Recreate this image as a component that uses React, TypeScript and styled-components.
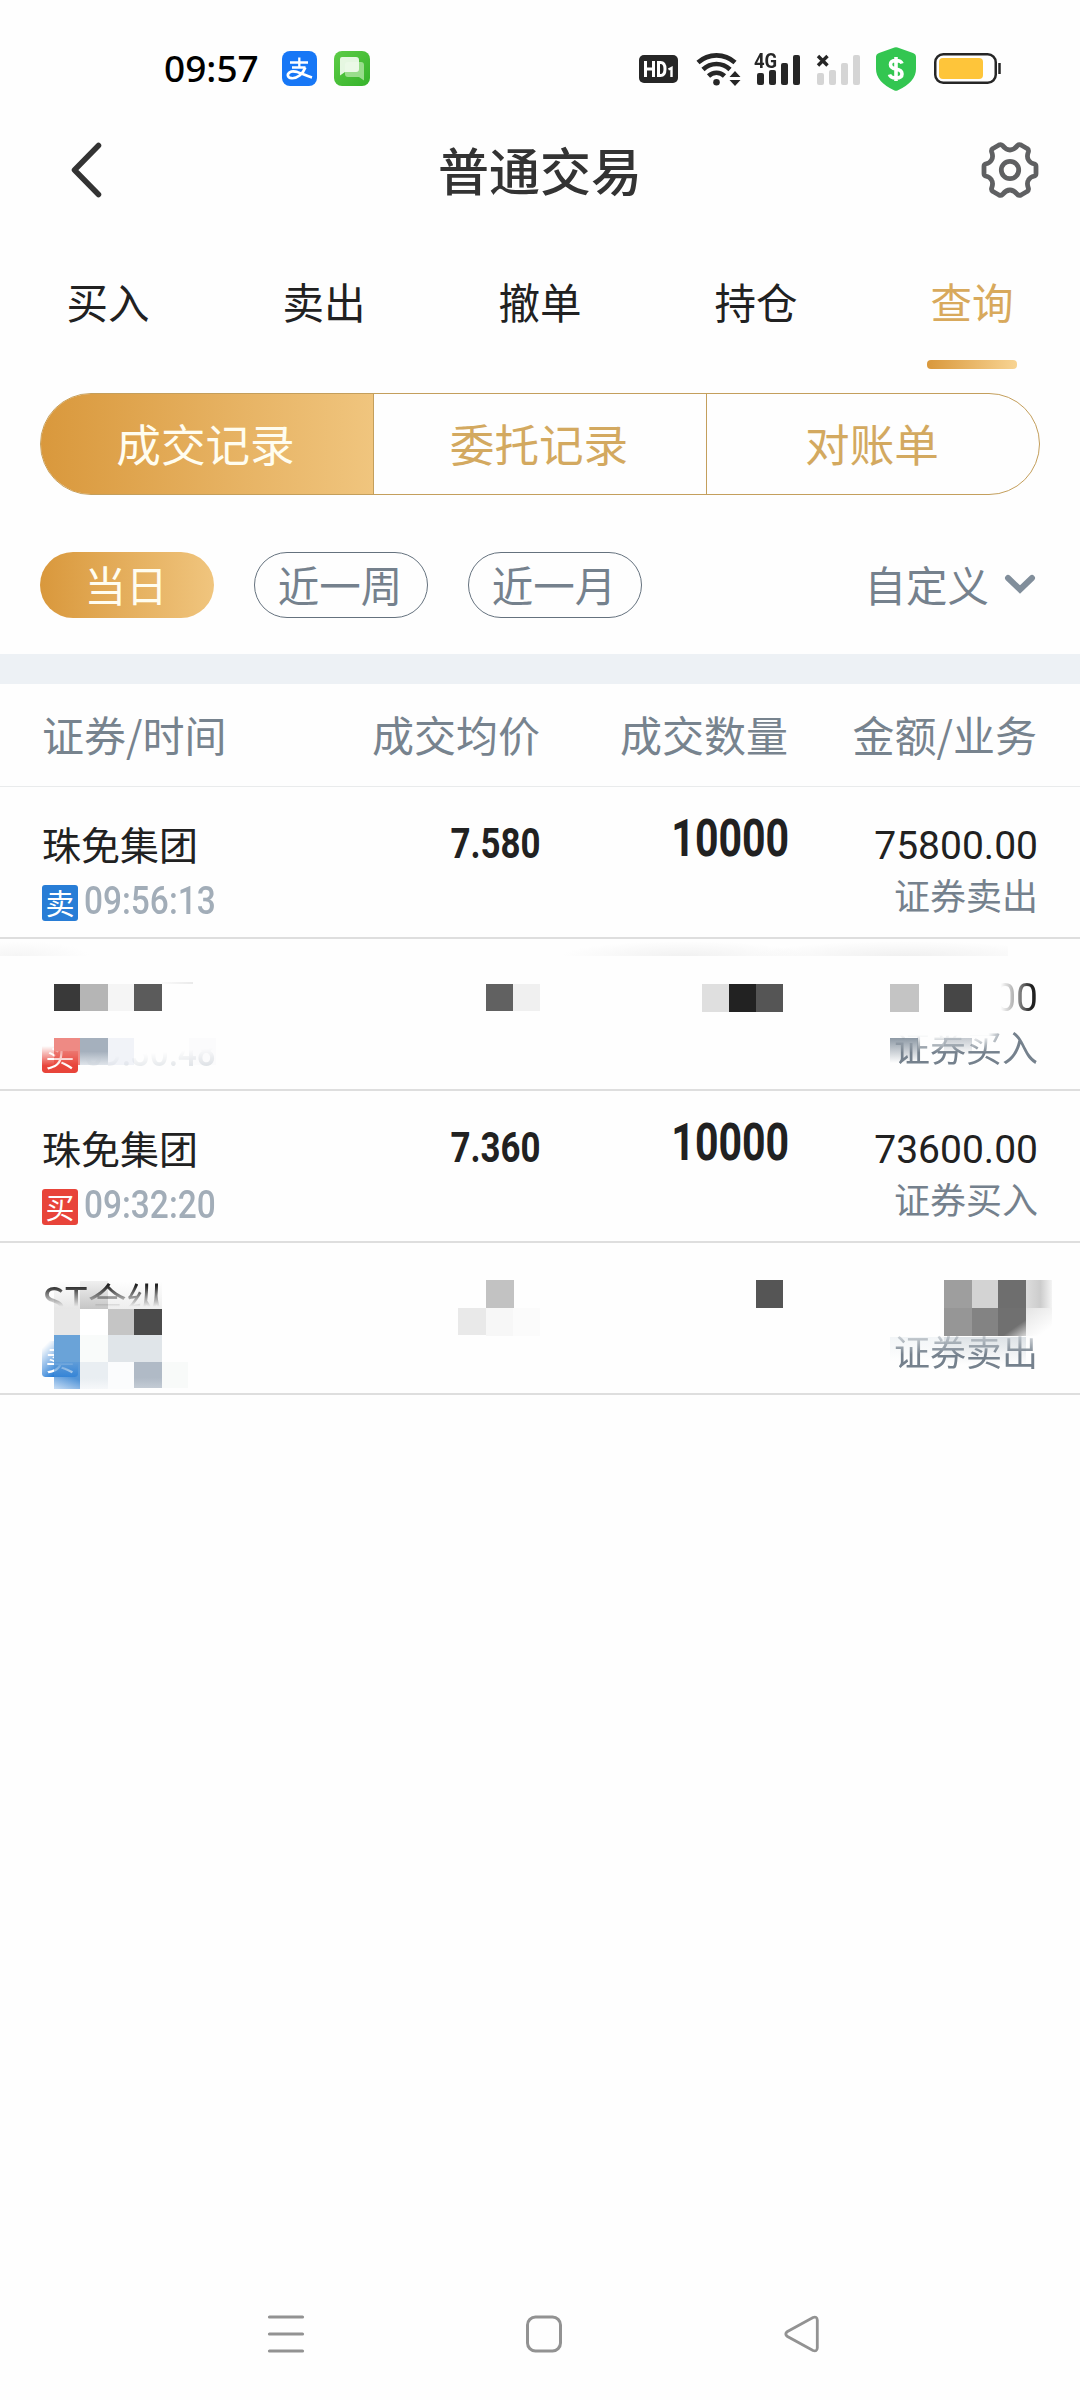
import React from "react";
import styled, { createGlobalStyle } from "styled-components";

const cjk = `"Noto Sans CJK SC", sans-serif`;
const digits = `Roboto, "Noto Sans CJK SC", sans-serif`;
const gold = "linear-gradient(90deg, #d9983c, #f0c57e)";

const GlobalStyle = createGlobalStyle`
  *, *::before, *::after { box-sizing: border-box; }
  body { margin: 0; background: #fefefe; }
`;

const Screen = styled.div`
  width: 1080px;
  height: 2400px;
  display: flex;
  flex-direction: column;
  background: #fefefe;
  font-family: ${cjk};
  color: #212121;
  overflow: hidden;
`;

const StatusBar = styled.header`
  height: 120px;
  padding: 17px 78px 0 164px;
  display: flex;
  align-items: center;
  flex: none;
`;
const Clock = styled.span`
  width: 118px;
  padding-bottom: 2px;
  font: 500 37px/40px "Noto Sans", sans-serif;
  color: #000;
  white-space: nowrap;
`;
const StatusApps = styled.div`
  display: flex;
  gap: 17px;
`;
const StatusSignals = styled.div`
  margin-left: auto;
  display: flex;
  align-items: center;
`;
const Glyph = styled.svg<{ $ml?: number }>`
  display: block;
  flex: none;
  margin-left: ${(p) => p.$ml ?? 0}px;
  overflow: visible;
`;

const TitleBar = styled.div`
  height: 102px;
  padding: 0 41px 2px 69px;
  display: grid;
  grid-template-columns: 369px 1fr 58px;
  align-items: center;
  flex: none;
`;
const Title = styled.h1`
  margin: 0;
  padding-bottom: 3px;
  font-size: 51px;
  line-height: 60px;
  font-weight: 500;
  color: #333;
`;

const Tabs = styled.nav`
  height: 171px;
  display: grid;
  grid-template-columns: repeat(5, 1fr);
  padding-top: 49px;
  flex: none;
`;
const Tab = styled.div<{ $active?: boolean }>`
  display: flex;
  flex-direction: column;
  align-items: center;
  gap: 29px;
  font-size: 41.5px;
  line-height: 60px;
  color: ${(p) => (p.$active ? "#d8a95c" : "#212121")};
  &::after {
    content: "";
    width: 90px;
    height: 9px;
    border-radius: 4px;
    background: ${(p) => (p.$active ? "linear-gradient(90deg, #d9983c, #f8d493)" : "none")};
  }
`;

const Segments = styled.div`
  height: 102px;
  margin: 0 40px;
  display: grid;
  grid-template-columns: 332px 333px 333px;
  border: 1px solid #c49f5c;
  border-radius: 51px;
  overflow: hidden;
  flex: none;
`;
const Segment = styled.div<{ $active?: boolean }>`
  margin: ${(p) => (p.$active ? "-1px 0 -1px -1px" : "0")};
  display: flex;
  align-items: center;
  justify-content: center;
  padding: 0 2px 4px 0;
  font-size: 44.6px;
  color: ${(p) => (p.$active ? "#fffdf0" : "#d3a960")};
  background: ${(p) => (p.$active ? gold : "none")};
  & + & { border-left: 1px solid #c49f5c; }
`;

const Filters = styled.div`
  height: 159px;
  padding: 57px 44px 0 40px;
  display: flex;
  align-items: flex-start;
  gap: 40px;
  flex: none;
`;
const Pill = styled.div<{ $active?: boolean }>`
  width: 174px;
  height: 66px;
  border-radius: 33px;
  border: ${(p) => (p.$active ? "0" : "1px solid #65727e")};
  background: ${(p) => (p.$active ? gold : "none")};
  color: ${(p) => (p.$active ? "#fffdf0" : "#75818d")};
  display: flex;
  align-items: center;
  justify-content: center;
  font-size: 41.5px;
  line-height: 60px;
  padding: 0 2px 3px 0;
`;
const CustomRange = styled.div`
  height: 64px;
  margin-left: auto;
  display: flex;
  align-items: center;
  gap: 15px;
  font-size: 41.5px;
  line-height: 60px;
  color: #75818d;
`;

const Divider = styled.div`
  height: 30px;
  background: #edf1f5;
  flex: none;
`;

const columns = "grid-template-columns: 298px 200px 248px 249px;";

const TableHead = styled.div`
  height: 103px;
  padding: 0 42px;
  padding-bottom: 3px;
  display: grid;
  ${columns}
  align-items: center;
  font-size: 42px;
  color: #77838e;
  border-bottom: 1px solid #e9ebec;
  flex: none;
`;
const HeadCell = styled.span<{ $end?: boolean }>`
  text-align: ${(p) => (p.$end ? "right" : "left")};
  white-space: nowrap;
`;

const Row = styled.article`
  position: relative;
  height: 152px;
  padding: 0 42px;
  display: grid;
  ${columns}
  border-bottom: 2px solid #dedede;
  flex: none;
`;
const Cell = styled.div<{ $end?: boolean; $top: number }>`
  display: flex;
  flex-direction: column;
  align-items: ${(p) => (p.$end ? "flex-end" : "flex-start")};
  padding-top: ${(p) => p.$top}px;
  white-space: nowrap;
`;
const Name = styled.div<{ $mask?: string }>`
  height: 48px;
  font-size: 39px;
  line-height: 48px;
  mask-image: ${(p) => p.$mask ?? "none"};
`;
const Meta = styled.div`
  display: flex;
  align-items: flex-start;
  gap: 6px;
  margin-top: 18px;
`;
const Side = styled.span<{ $buy?: boolean; $mask?: string }>`
  width: 36px;
  height: 36px;
  border-radius: 3px;
  background: ${(p) => (p.$buy ? "#e8443a" : "#287dd6")};
  color: #fff;
  font-size: 29px;
  line-height: 34px;
  text-align: center;
  mask-image: ${(p) => p.$mask ?? "none"};
`;
const Time = styled.span<{ $mask?: string }>`
  font: 500 39.5px/32px ${digits};
  color: #a2adb8;
  transform: scaleX(0.847);
  transform-origin: left;
  mask-image: ${(p) => p.$mask ?? "none"};
`;
const Price = styled.div`
  font: 700 42px/48px ${digits};
  transform: translateX(1px) scaleX(0.83);
  transform-origin: right;
`;
const Quantity = styled.div`
  font: 700 52px/56px ${digits};
  transform: translateX(1px) scaleX(0.79);
  transform-origin: right;
`;
const Amount = styled.div<{ $mask?: string }>`
  height: 44px;
  margin-right: -1px;
  font: 400 39px/44px ${digits};
  mask-image: ${(p) => p.$mask ?? "none"};
`;
const Business = styled.div<{ $mask?: string }>`
  font-size: 36px;
  line-height: 44px;
  margin: 4px -1px 0 0;
  color: #75818d;
  mask-image: ${(p) => p.$mask ?? "none"};
`;
const Block = styled.i<{ $b: BlockSpec }>`
  position: absolute;
  left: ${(p) => p.$b[0]}px;
  top: ${(p) => p.$b[1]}px;
  width: ${(p) => p.$b[2]}px;
  height: ${(p) => p.$b[3]}px;
  background: ${(p) => p.$b[4]};
`;
const NavBar = styled.footer`
  height: 132px;
  margin-top: auto;
  padding: 0 260px 0 267px;
  display: flex;
  align-items: center;
  justify-content: space-between;
  flex: none;
`;

/* left, top, width, height, fill — relative to the row */
type BlockSpec = [number, number, number, number, string];

type Trade = {
  name?: string;
  time?: string;
  buy: boolean;
  price?: string;
  quantity?: string;
  amount?: string;
  masks?: { name?: string; side?: string; time?: string; amount?: string; business?: string };
  under?: BlockSpec[];
  over?: BlockSpec[];
};

const trades: Trade[] = [
  { name: "珠免集团", time: "09:56:13", buy: false, price: "7.580", quantity: "10000", amount: "75800.00" },
  {
    time: "09:30:48",
    buy: true,
    amount: "00",
    masks: {
      side: "linear-gradient(180deg, transparent 25%, #000 80%)",
      time: "linear-gradient(176deg, transparent 50%, rgba(0,0,0,.4) 100%)",
      amount: "linear-gradient(90deg, transparent 15%, rgba(0,0,0,.35) 45%, #000 85%)",
      business: "linear-gradient(260deg, #000 22%, transparent 34%), linear-gradient(180deg, transparent 25%, #000 65%)",
    },
    under: [
      [0, 2, 90, 15, "radial-gradient(ellipse at 20% 100%, #f5f5f5, transparent 70%)"],
      [560, 2, 250, 15, "radial-gradient(ellipse at 50% 100%, #f1f1f1, transparent 70%)"],
      [750, 2, 258, 15, "radial-gradient(ellipse at 60% 100%, #f0f0f0, transparent 70%)"],
      [890, 99, 28, 25, "linear-gradient(#8d99a5, transparent)"],
      [944, 99, 28, 17, "linear-gradient(#c5cad0, transparent)"],
      [108, 99, 26, 27, "#f1f3f8"],
      [189, 99, 27, 27, "#fbfbfc"],
      [80, 99, 28, 27, "linear-gradient(#a5b0bd 50%, #dfe4ea)"],
      [54, 99, 26, 27, "#ee8a84"],
    ],
    over: [
      [54, 99, 26, 13, "#ee8a84"],
      [80, 99, 28, 13, "#a5b0bd"],
      [54, 45, 26, 27, "#393939"],
      [80, 45, 28, 27, "#b5b5b5"],
      [108, 45, 26, 27, "#f5f5f5"],
      [134, 45, 28, 27, "#5b5b5b"],
      [162, 43, 31, 2, "linear-gradient(90deg, #fafafa, #eaeaea)"],
      [486, 45, 27, 27, "#616161"],
      [513, 45, 27, 27, "#f0f0f0"],
      [702, 45, 27, 28, "#dfdfdf"],
      [729, 45, 27, 28, "#222222"],
      [756, 45, 27, 28, "#555555"],
      [890, 45, 29, 28, "#c4c4c4"],
      [944, 45, 28, 28, "#464646"],
    ],
  },
  { name: "珠免集团", time: "09:32:20", buy: true, price: "7.360", quantity: "10000", amount: "73600.00" },
  {
    name: "ST合纵",
    buy: false,
    masks: {
      name: "linear-gradient(180deg, #000 22%, transparent 66%)",
      side: "linear-gradient(135deg, transparent 10%, #000 65%)",
      business: "linear-gradient(180deg, rgba(0,0,0,.25) 15%, #000 60%)",
    },
    under: [
      [54, 38, 26, 28, "linear-gradient(#fefefe, #e6e6e6)"],
      [80, 38, 28, 28, "linear-gradient(#f0f0f0, #c6c6c6)"],
      [108, 38, 54, 28, "linear-gradient(#fefefe, #eeeeee)"],
      [890, 94, 54, 24, "linear-gradient(#f2f5f7, transparent)"],
      [944, 94, 82, 28, "linear-gradient(#dde2e6, transparent)"],
      [54, 119, 26, 27, "linear-gradient(200deg, #5395d8 50%, #c9def5)"],
    ],
    over: [
      [54, 66, 26, 26, "#e7e7e7"],
      [80, 66, 28, 26, "#ffffff"],
      [108, 66, 26, 26, "#c5c5c5"],
      [134, 66, 28, 26, "#4b4b4b"],
      [54, 92, 26, 27, "#6aa3d8"],
      [54, 119, 26, 15, "linear-gradient(#5f9cd8, #5395d850)"],
      [80, 92, 28, 27, "#f9fbfa"],
      [108, 92, 54, 27, "#e0e5e9"],
      [80, 119, 28, 27, "linear-gradient(#e9eef2 60%, #f6f8fa)"],
      [108, 119, 26, 27, "#fbfcfd"],
      [134, 119, 28, 26, "linear-gradient(#b0bac6 60%, #c3cbd4)"],
      [162, 119, 26, 26, "#f8faf9"],
      [486, 37, 28, 28, "#c2c2c2"],
      [458, 65, 28, 27, "#e9e9e9"],
      [486, 65, 27, 28, "#f7f7f7"],
      [513, 65, 27, 28, "#fbfbfb"],
      [756, 37, 27, 28, "#555555"],
      [944, 37, 28, 28, "#9e9e9e"],
      [972, 37, 26, 28, "#d3d3d3"],
      [998, 37, 28, 28, "#6e6e6e"],
      [1026, 37, 26, 28, "linear-gradient(90deg, #dddddd, #cccccc 55%, #f4f4f4)"],
      [944, 65, 28, 28, "#969696"],
      [972, 65, 26, 28, "#838383"],
      [998, 65, 28, 28, "linear-gradient(145deg, #707070 65%, #d6d6d6)"],
      [1026, 65, 26, 28, "linear-gradient(145deg, #e4e4e4, #fefefe 80%)"],
    ],
  },
];

const TradeRow = ({ trade }: { trade: Trade }) => {
  const masks = trade.masks ?? {};
  return (
    <Row>
      {trade.under?.map((b, i) => <Block key={i} $b={b} />)}
      <Cell $top={32}>
        <Name $mask={masks.name}>{trade.name}</Name>
        <Meta>
          <Side $buy={trade.buy} $mask={masks.side}>{trade.buy ? "买" : "卖"}</Side>
          <Time $mask={masks.time}>{trade.time}</Time>
        </Meta>
      </Cell>
      <Cell $end $top={33}><Price>{trade.price}</Price></Cell>
      <Cell $end $top={24}><Quantity>{trade.quantity}</Quantity></Cell>
      <Cell $end $top={37}>
        <Amount $mask={masks.amount}>{trade.amount}</Amount>
        <Business $mask={masks.business}>{trade.buy ? "证券买入" : "证券卖出"}</Business>
      </Cell>
      {trade.over?.map((b, i) => <Block key={i} $b={b} />)}
    </Row>
  );
};

const AlipayIcon = () => (
  <Glyph width="35" height="35" viewBox="0 0 35 35">
    <rect width="35" height="35" rx="8" fill="#1777f6" />
    <g fill="none" stroke="#fff" strokeWidth="2.3">
      <path d="M8 11.5H26M17.3 6.5V16.5M10 16.5H23.5" />
      <path d="M23.3 16.5C21 23 15 27.7 9.5 27.2C5.5 26.8 4.7 23.4 7.6 21.3C13 18 19.5 23.5 30 26.5" strokeWidth="2.7" />
    </g>
  </Glyph>
);

const ChatIcon = () => (
  <Glyph width="36" height="35" viewBox="0 0 36 35">
    <defs>
      <linearGradient id="chat" x2="1" y2="1">
        <stop stopColor="#5dcc47" />
        <stop offset="1" stopColor="#35b32a" />
      </linearGradient>
    </defs>
    <rect width="36" height="35" rx="8" fill="url(#chat)" />
    <path d="M14 11H27Q30 11 30 14V29.5L25 26H14Q11 26 11 23V14Q11 11 14 11Z" fill="#b5e8aa" opacity=".75" />
    <path d="M8 6H22Q25 6 25 9V18Q25 21 22 21H11L6 24.500V8Q6 6 8 6Z" fill="#f1fbee" opacity=".93" />
  </Glyph>
);

const HdIcon = () => (
  <Glyph width="39" height="28" viewBox="0 0 39 28">
    <rect width="39" height="28" rx="5" fill="#262626" />
    <g fill="none" stroke="#fff" strokeWidth="3">
      <path d="M6.500 6V22M14.500 6V22M6.500 14H14.500" />
      <path d="M19.500 7.500V20.500H21.500Q26 20.500 26 14Q26 7.500 21.500 7.500Z" />
      <path d="M29.500 14.500L32.500 13V22" strokeWidth="2.400" />
    </g>
  </Glyph>
);

const WifiIcon = () => (
  <Glyph $ml={18} width="44" height="34" viewBox="0 0 44 34">
    <g fill="none" stroke="#262626" strokeWidth="4.600">
      <path d="M2 10.500A27.500 27.500 0 0 1 39 10.500" />
      <path d="M7 17.500A19.500 19.500 0 0 1 34 17.500" />
      <path d="M12.500 24A11.500 11.500 0 0 1 28.500 24" />
    </g>
    <circle cx="20.500" cy="30.300" r="3.300" fill="#262626" />
    <path d="M39 19L44.500 25H33.500ZM33.500 28H44.500L39 34Z" fill="#262626" />
  </Glyph>
);

const NetLabel = styled.span`
  position: absolute;
  left: 0;
  top: -2px;
  font: 700 21px/20px Roboto, sans-serif;
  color: #262626;
  transform: scaleX(0.88);
  transform-origin: left;
`;
const Cellular = styled.div`
  position: relative;
  margin: 0 -1px 0 14px;
`;
const Bars = ({ color, mark }: { color: string; mark?: boolean }) => (
  <Glyph width="47" height="32" viewBox="0 0 47 32">
    <g fill={color}>
      <rect x="3" y="20" width="7" height="12" rx="2" />
      <rect x="15" y="17" width="7" height="15" rx="2" />
      <rect x="27" y="10" width="7" height="22" rx="2" />
      <rect x="39" y="2" width="7" height="30" rx="2" />
    </g>
    {mark && <path d="M4 3L13.500 12.500M13.500 3L4 12.500" stroke="#262626" strokeWidth="3.400" />}
  </Glyph>
);

const ShieldIcon = () => (
  <Glyph $ml={16} width="40" height="44" viewBox="0 0 40 44">
    <path d="M18.500 .5Q20 0 21.500 .5L37 6Q40 7 40 10V22Q40 35 21.500 43.500Q20 44 18.500 43.500Q0 35 0 22V10Q0 7 3 6Z" fill="#33c651" />
    <path d="M26 16.500Q25 13.500 20 13.500Q14.500 13.500 14.500 17.500Q14.500 21 20 22Q26 23 26 27Q26 31 20 31Q14.500 31 13.500 27.500M20 10V34" fill="none" stroke="#fff" strokeWidth="3.600" />
  </Glyph>
);

const BatteryIcon = () => (
  <Glyph $ml={18} width="68" height="31" viewBox="0 0 68 31">
    <rect x="1.250" y="1.250" width="60.500" height="28.500" rx="8" fill="none" stroke="#262626" strokeWidth="2.500" />
    <rect x="5" y="5" width="44" height="21" rx="4" fill="#fec53a" />
    <path d="M65.500 10V21" stroke="#262626" strokeWidth="2.500" />
  </Glyph>
);

const GearIcon = () => (
  <Glyph width="58" height="56" viewBox="-29 -28 58 56" fill="none" stroke="#5f6062" strokeWidth="4.800" strokeLinejoin="round">
    <path d="M-11 -25Q-9 -26 -7.500 -24.500Q-4 -20 0 -20Q4 -20 7.500 -24.500Q9 -26 11 -25L17 -21.500Q19 -20.500 18.300 -18Q16.500 -13 18.500 -10Q20 -7 24.500 -6Q26 -5.500 26 -3.500V3.500Q26 5.500 24.500 6Q20 7 18.500 10Q16.500 13 18.300 18Q19 20.500 17 21.500L11 25Q9 26 7.500 24.500Q4 20 0 20Q-4 20 -7.500 24.500Q-9 26 -11 25L-17 21.500Q-19 20.500 -18.300 18Q-16.500 13 -18.500 10Q-20 7 -24.500 6Q-26 5.500 -26 3.500V-3.500Q-26 -5.500 -24.500 -6Q-20 -7 -18.500 -10Q-16.500 -13 -18.300 -18Q-19 -20.500 -17 -21.500Z" />
    <circle r="8.700" />
  </Glyph>
);

export default function App() {
  return (
    <Screen>
      <GlobalStyle />
      <StatusBar>
        <Clock>09:57</Clock>
        <StatusApps><AlipayIcon /><ChatIcon /></StatusApps>
        <StatusSignals>
          <HdIcon />
          <WifiIcon />
          <Cellular><Bars color="#262626" /><NetLabel>4G</NetLabel></Cellular>
          <Cellular><Bars color="#d5d5d5" mark /></Cellular>
          <ShieldIcon />
          <BatteryIcon />
        </StatusSignals>
      </StatusBar>
      <TitleBar>
        <Glyph width="34" height="56" viewBox="0 0 34 56" fill="none" stroke="#333" strokeWidth="5.500" strokeLinecap="round" strokeLinejoin="round">
          <path d="M29.500 3.500L5.500 28L29.500 52.500" />
        </Glyph>
        <Title>普通交易</Title>
        <GearIcon />
      </TitleBar>
      <Tabs>
        {["买入", "卖出", "撤单", "持仓", "查询"].map((t) => <Tab key={t} $active={t === "查询"}>{t}</Tab>)}
      </Tabs>
      <Segments>
        <Segment $active>成交记录</Segment>
        <Segment>委托记录</Segment>
        <Segment>对账单</Segment>
      </Segments>
      <Filters>
        <Pill $active>当日</Pill>
        <Pill>近一周</Pill>
        <Pill>近一月</Pill>
        <CustomRange>
          自定义
          <Glyph width="32" height="20" viewBox="0 0 32 20" fill="none" stroke="#818e9b" strokeWidth="6" strokeLinecap="round">
            <path d="M4 4L16 15.500L28 4" />
          </Glyph>
        </CustomRange>
      </Filters>
      <Divider />
      <TableHead>
        <HeadCell>证券/时间</HeadCell>
        <HeadCell $end>成交均价</HeadCell>
        <HeadCell $end>成交数量</HeadCell>
        <HeadCell $end>金额/业务</HeadCell>
      </TableHead>
      {trades.map((t, i) => <TradeRow key={i} trade={t} />)}
      <NavBar>
        <Glyph width="38" height="38" viewBox="0 0 38 38" stroke="#929292" strokeWidth="3.200" strokeLinecap="round">
          <path d="M2.500 2H35.500M2.500 19H35.500M2.500 36H35.500" />
        </Glyph>
        <Glyph width="36" height="38" viewBox="0 0 36 38" fill="none" stroke="#929292" strokeWidth="3">
          <rect x=".5" y="2" width="33" height="34" rx="8" />
        </Glyph>
        <Glyph width="36" height="38" viewBox="0 0 36 38" fill="none" stroke="#929292" strokeWidth="2.800">
          <path d="M3.500 16.500L29 2.500Q33 1 33.300 5V33Q33 37 29 35.500L3.500 21.500Q0 19 3.500 16.500Z" />
        </Glyph>
      </NavBar>
    </Screen>
  );
}
